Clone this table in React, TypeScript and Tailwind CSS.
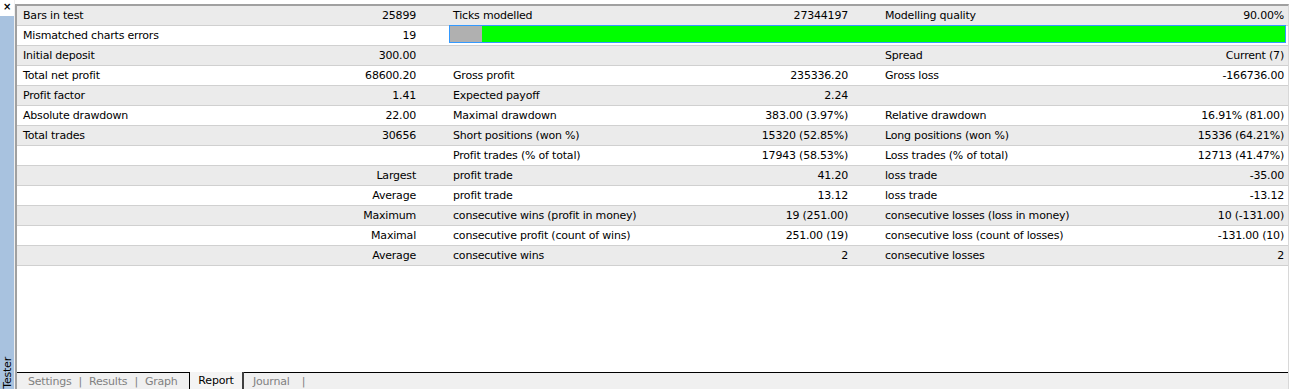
import React from "react";

type Row = [string, string, string, string, string, string];

const rows: Row[] = [
  ["Bars in test", "25899", "Ticks modelled", "27344197", "Modelling quality", "90.00%"],
  ["Mismatched charts errors", "19", "", "", "", ""],
  ["Initial deposit", "300.00", "", "", "Spread", "Current (7)"],
  ["Total net profit", "68600.20", "Gross profit", "235336.20", "Gross loss", "-166736.00"],
  ["Profit factor", "1.41", "Expected payoff", "2.24", "", ""],
  ["Absolute drawdown", "22.00", "Maximal drawdown", "383.00 (3.97%)", "Relative drawdown", "16.91% (81.00)"],
  ["Total trades", "30656", "Short positions (won %)", "15320 (52.85%)", "Long positions (won %)", "15336 (64.21%)"],
  ["", "", "Profit trades (% of total)", "17943 (58.53%)", "Loss trades (% of total)", "12713 (41.47%)"],
  ["", "Largest", "profit trade", "41.20", "loss trade", "-35.00"],
  ["", "Average", "profit trade", "13.12", "loss trade", "-13.12"],
  ["", "Maximum", "consecutive wins (profit in money)", "19 (251.00)", "consecutive losses (loss in money)", "10 (-131.00)"],
  ["", "Maximal", "consecutive profit (count of wins)", "251.00 (19)", "consecutive loss (count of losses)", "-131.00 (10)"],
  ["", "Average", "consecutive wins", "2", "consecutive losses", "2"],
];

function DataRow({ r, i }: { r: Row; i: number }) {
  const bg = i % 2 === 0 ? "bg-[#ebebeb]" : "bg-white";
  if (i === 1) {
    return (
      <div className={`flex h-[20px] items-center border-b border-[#d0d0d0] ${bg}`}>
        <div className="w-[203px] shrink-0 pl-[6px] pt-[2px]">{r[0]}</div>
        <div className="w-[196px] shrink-0 text-right pt-[2px]">{r[1]}</div>
        <div className="w-[33px] shrink-0" />
        <div className="mb-[3px] mr-[2px] flex h-[18px] flex-1 border border-[#3399ff]">
          <div className="w-[32px] bg-[#b0b0b0]" />
          <div className="flex-1 bg-[#00ff00]" />
        </div>
      </div>
    );
  }
  return (
    <div className={`flex h-[20px] items-center border-b border-[#d0d0d0] pt-[2px] ${bg}`}>
      <div className="w-[203px] shrink-0 pl-[6px]">{r[0]}</div>
      <div className="w-[196px] shrink-0 text-right">{r[1]}</div>
      <div className="w-[239px] shrink-0 pl-[37px]">{r[2]}</div>
      <div className="w-[193px] shrink-0 text-right">{r[3]}</div>
      <div className="w-[239px] shrink-0 pl-[37px]">{r[4]}</div>
      <div className="flex-1 text-right pr-[4px]">{r[5]}</div>
    </div>
  );
}

export default function App() {
  return (
    <div
      className="flex h-[389px] w-[1292px] overflow-hidden bg-white text-[11px] tracking-[-0.2px] text-black"
      style={{ fontFamily: '"DejaVu Sans", sans-serif' }}
    >
      {/* sidebar */}
      <div className="flex w-[14px] shrink-0 flex-col">
        <div className="flex h-[16px] items-start justify-center pt-[2px] text-[10px] font-bold leading-[10px]">×</div>
        <div className="flex flex-1 items-end justify-center bg-[#a8c2df]">
          <div className="mb-[0px] rotate-180 text-[11px] leading-[13px] [writing-mode:vertical-rl]">Tester</div>
        </div>
      </div>
      <div className="w-[1px] shrink-0 bg-[#f0f0f0]" />
      <div className="mt-[4px] w-[2px] shrink-0 bg-[#a0a0a0]" />
      {/* main */}
      <div className="flex flex-1 flex-col">
        <div className="h-[4px]" />
        <div className="flex flex-1 flex-col border-r border-t-2 border-[#a0a0a0] border-r-[#d8d8d8]">
          <div className="flex-1">
            {rows.map((r, i) => (
              <DataRow key={i} r={r} i={i} />
            ))}
          </div>
          <div className="flex h-[17px] items-stretch bg-[#f0f0f0] text-[11px]">
            <div className="flex w-[172px] items-center border-t border-black pl-[11px] pt-[2px] text-[#808080]">
              <span>Settings</span>
              <span className="mx-[7px]">|</span>
              <span>Results</span>
              <span className="mx-[7px]">|</span>
              <span>Graph</span>
            </div>
            <div className="flex w-[55px] items-center justify-center border-l border-r-2 border-black border-r-[#404040] bg-[#f4f4f4] pt-[2px] text-black">
              Report
            </div>
            <div className="flex flex-1 items-center border-t border-black pl-[9px] pt-[2px] text-[#808080]">
              <span>Journal</span>
              <span className="mx-[12px]">|</span>
            </div>
          </div>
        </div>
      </div>
      <div className="w-[3px] shrink-0 bg-white" />
    </div>
  );
}
